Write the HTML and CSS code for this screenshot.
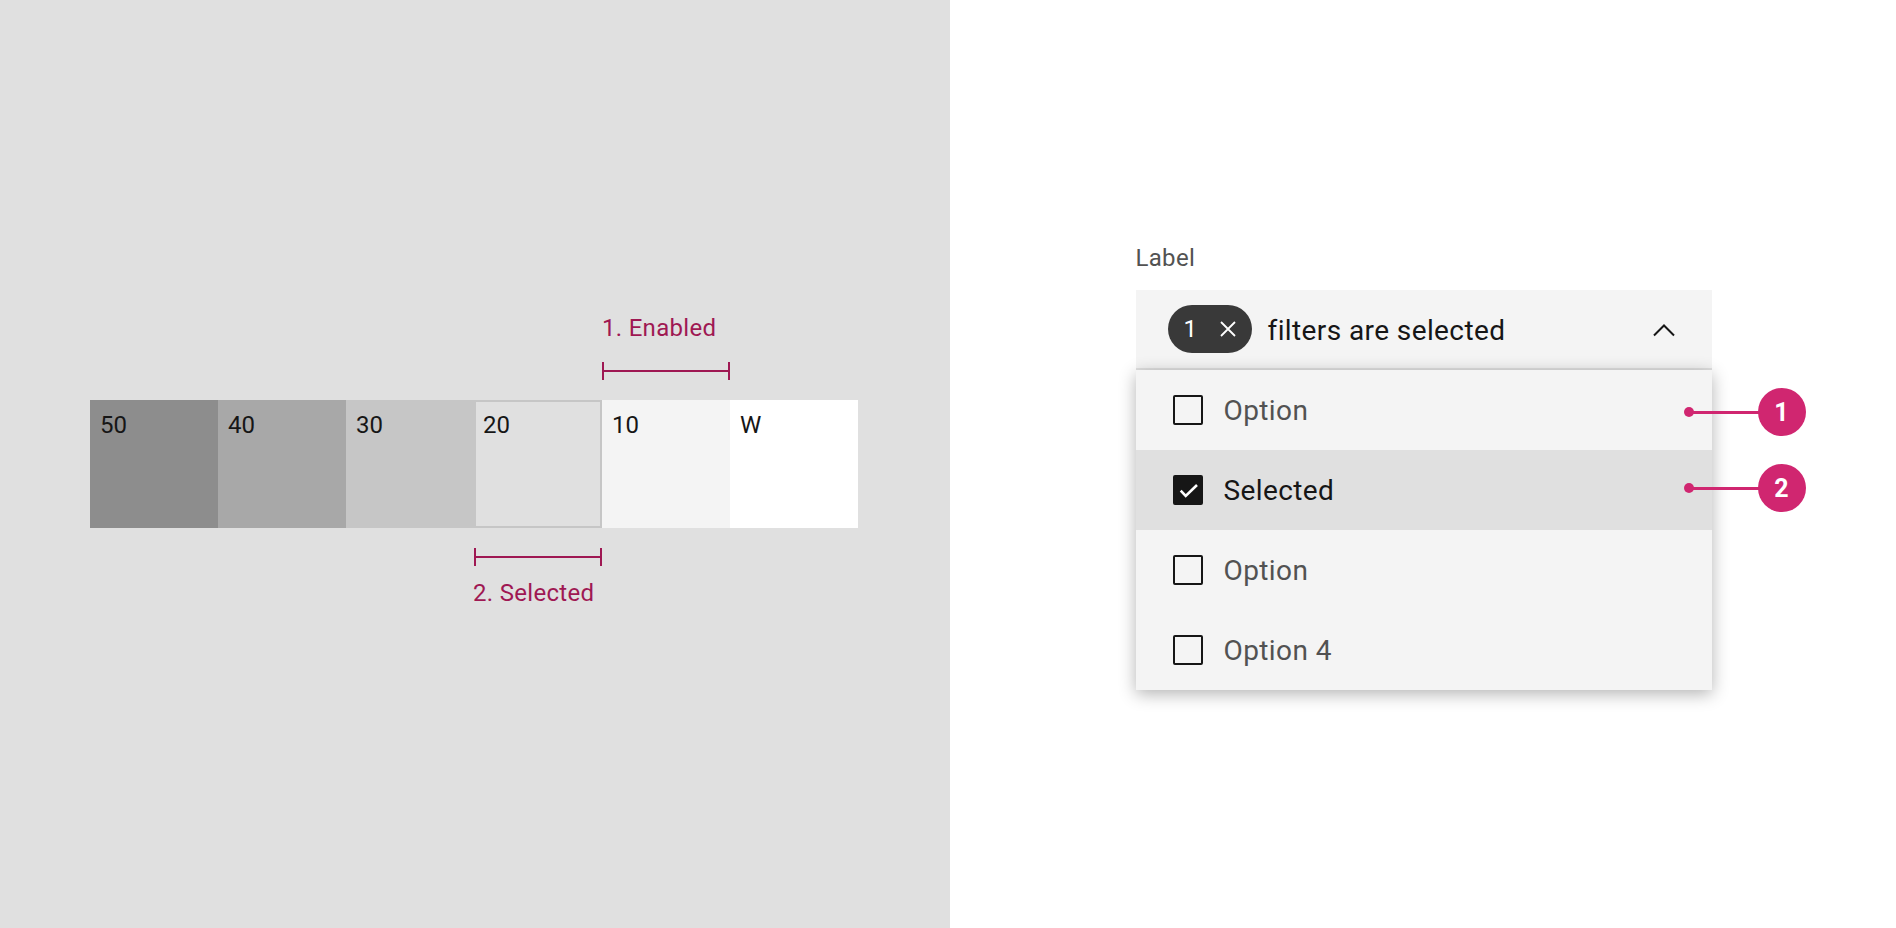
FILE: index.html
```html
<!DOCTYPE html>
<html lang="en">
<head>
<meta charset="utf-8">
<title>Multiselect states</title>
<link rel="stylesheet" href="styles.css">
</head>
<body>
<div class="page">
  <section class="left">
    <div class="diagram">
      <div class="note note-top">
        <div class="note-text">1. Enabled</div>
        <div class="bracket bracket-top"></div>
      </div>
      <div class="swatches">
        <div class="swatch s50">50</div>
        <div class="swatch s40">40</div>
        <div class="swatch s30">30</div>
        <div class="swatch s20">20</div>
        <div class="swatch s10">10</div>
        <div class="swatch sw">W</div>
      </div>
      <div class="note note-bottom">
        <div class="bracket bracket-bottom"></div>
        <div class="note-text">2. Selected</div>
      </div>
    </div>
  </section>
  <section class="right">
    <div class="multiselect">
      <div class="label">Label</div>
      <div class="field">
        <div class="tag">
          <span class="tag-count">1</span>
          <svg class="tag-x" width="16" height="16" viewBox="0 0 16 16"><path d="M1 1L15 15M15 1L1 15" stroke="#ffffff" stroke-width="1.8" fill="none"/></svg>
        </div>
        <span class="field-text">filters are selected</span>
        <svg class="chevron" width="32" height="32" viewBox="0 0 32 32"><polyline points="6,21.5 16,11.5 26,21.5" stroke="#161616" stroke-width="2" fill="none"/></svg>
      </div>
      <div class="menu">
        <div class="item">
          <span class="box"></span>
          <span class="item-text">Option</span>
          <div class="callout callout-1"><span class="dot"></span><span class="line"></span><span class="badge">1</span></div>
        </div>
        <div class="item item-selected">
          <span class="box box-checked"><svg width="26" height="26" viewBox="0 0 26 26"><polyline points="5.7,13.7 10.7,19 22,8" stroke="#ffffff" stroke-width="2.6" fill="none"/></svg></span>
          <span class="item-text">Selected</span>
          <div class="callout callout-2"><span class="dot"></span><span class="line"></span><span class="badge">2</span></div>
        </div>
        <div class="item">
          <span class="box"></span>
          <span class="item-text">Option</span>
        </div>
        <div class="item">
          <span class="box"></span>
          <span class="item-text">Option 4</span>
        </div>
      </div>
    </div>
  </section>
</div>
</body>
</html>
```
FILE: styles.css
```css
* { box-sizing: border-box; }
html, body { margin: 0; padding: 0; }
body {
  font-family: Roboto, "Liberation Sans", sans-serif;
  color: #161616;
  background: #ffffff;
}
.page {
  display: flex;
  width: 1896px;
  height: 928px;
  overflow: hidden;
}
.left {
  width: 950px;
  flex: none;
  background: #e0e0e0;
  padding-top: 312px;
  display: flex;
  justify-content: center;
}
.diagram {
  width: 768px;
  margin-left: -2px;
}
.note {
  width: 128px;
  display: flex;
  flex-direction: column;
}
.note-top { margin-left: 512px; }
.note-bottom { margin-left: 384px; }
.note-text {
  font-size: 24px;
  line-height: 32px;
  color: #9f1853;
  letter-spacing: 0.3px;
  white-space: nowrap;
}
.note-bottom .note-text { margin-top: 11px; margin-left: -1px; }
.bracket {
  height: 18px;
  border-left: 2px solid #9f1853;
  border-right: 2px solid #9f1853;
  background: linear-gradient(#9f1853, #9f1853) center / 100% 2px no-repeat;
}
.bracket-top { margin-top: 18px; margin-bottom: 20px; }
.bracket-bottom { margin-top: 20px; }
.swatches {
  display: flex;
}
.swatch {
  width: 128px;
  height: 128px;
  padding: 9px 10px;
  font-size: 24px;
  line-height: 32px;
  color: #161616;
}
.s50 { background: #8d8d8d; }
.s40 { background: #a8a8a8; }
.s30 { background: #c6c6c6; }
.s20 { background: #e0e0e0; border: 2px solid #c6c6c6; padding: 7px 7px; }
.s10 { background: #f4f4f4; }
.sw { background: #ffffff; }

.right {
  flex: 1;
  display: flex;
  justify-content: center;
  padding-top: 242px;
  padding-left: 1px;
}
.multiselect {
  width: 576px;
}
.label {
  font-size: 24px;
  line-height: 32px;
  color: #525252;
  letter-spacing: 0.32px;
  margin-bottom: 16px;
}
.field {
  height: 80px;
  background: #f4f4f4;
  border-bottom: 2px solid #e0e0e0;
  display: flex;
  align-items: center;
  padding: 0 32px;
}
.tag {
  width: 84px;
  height: 48px;
  border-radius: 24px;
  background: #393939;
  display: flex;
  align-items: center;
  padding: 0 16px 0 16px;
  justify-content: space-between;
  flex: none;
}
.tag-count {
  color: #ffffff;
  font-size: 24px;
  line-height: 32px;
}
.tag-x { display: block; }
.field-text {
  margin-left: 16px;
  font-size: 28px;
  letter-spacing: 0.4px;
  color: #161616;
  padding-top: 2px;
}
.chevron {
  margin-left: auto;
  display: block;
  margin-top: 1px;
}
.menu {
  background: #f4f4f4;
  box-shadow: 0 4px 16px rgba(0, 0, 0, 0.3);
}
.item {
  height: 80px;
  display: flex;
  align-items: center;
  padding-left: 37px;
  position: relative;
}
.item-selected { background: #e0e0e0; }
.box {
  width: 30px;
  height: 30px;
  border: 2px solid #161616;
  border-radius: 2px;
  flex: none;
  display: flex;
  align-items: center;
  justify-content: center;
}
.box-checked { background: #161616; }
.box svg { display: block; }
.item-text {
  margin-left: 21px;
  font-size: 28px;
  letter-spacing: 0.4px;
  color: #525252;
}
.item-selected .item-text { color: #161616; }
.callout {
  position: absolute;
  left: 548px;
  top: 50%;
  display: flex;
  align-items: center;
  transform: translateY(-50%);
}
.callout-1 { margin-top: 2px; }
.callout-2 { margin-top: -2px; }
.dot {
  width: 10px;
  height: 10px;
  border-radius: 50%;
  background: #d02670;
  flex: none;
}
.line {
  width: 68px;
  height: 3px;
  margin-left: -2px;
  background: #d02670;
  flex: none;
}
.badge {
  width: 48px;
  height: 48px;
  border-radius: 50%;
  background: #d02670;
  color: #ffffff;
  font-weight: 700;
  font-size: 25px;
  display: flex;
  align-items: center;
  justify-content: center;
  flex: none;
  margin-left: -2px;
}
```
